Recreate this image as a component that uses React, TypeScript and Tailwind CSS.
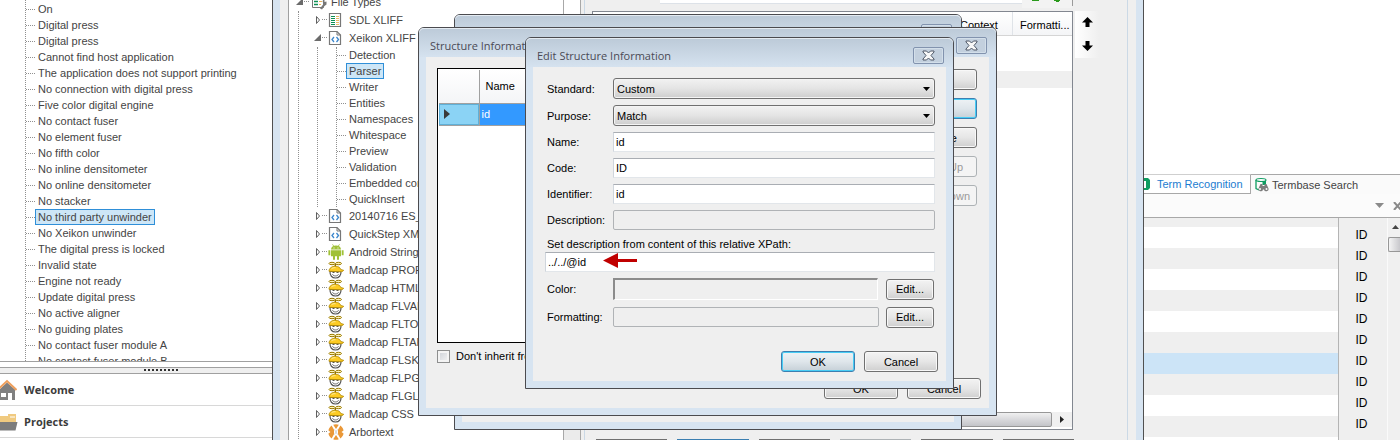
import type { ReactNode } from "react";
import clsx from "clsx";

const bodyFont = "font-['Liberation_Sans',Arial,sans-serif] text-[11px]";
const titleFont = "font-['Open_Sans','Liberation_Sans',sans-serif]";

const messages = [
  "On",
  "Digital press",
  "Digital press",
  "Cannot find host application",
  "The application does not support printing",
  "No connection with digital press",
  "Five color digital engine",
  "No contact fuser",
  "No element fuser",
  "No fifth color",
  "No inline densitometer",
  "No online densitometer",
  "No stacker",
  "No third party unwinder",
  "No Xeikon unwinder",
  "The digital press is locked",
  "Invalid state",
  "Engine not ready",
  "Update digital press",
  "No active aligner",
  "No guiding plates",
  "No contact fuser module A",
  "No contact fuser module B",
];

const parserPages = [
  "Detection",
  "Parser",
  "Writer",
  "Entities",
  "Namespaces",
  "Whitespace",
  "Preview",
  "Validation",
  "Embedded content",
  "QuickInsert",
];

function Label({ children, selected }: { children: ReactNode; selected?: boolean }) {
  return (
    <span
      className={clsx(
        "border px-[2px] leading-[14px] whitespace-nowrap",
        selected ? "border-[#2f8fd8] bg-[#cde6f7]" : "border-transparent",
      )}
    >
      {children}
    </span>
  );
}

function Leaf({ children, selected }: { children: ReactNode; selected?: boolean }) {
  return (
    <li className="flex h-4 items-center">
      <span className="w-[9px] border-t border-dotted border-[#909090]" />
      <Label selected={selected}>{children}</Label>
    </li>
  );
}

function Expander({ open }: { open?: boolean }) {
  return (
    <svg width="14" height="18" viewBox="0 0 14 18" className="shrink-0" shapeRendering="crispEdges">
      <path d="M8 8h1v1H8zM10 8h1v1h-1zM12 8h1v1h-1z" fill="#909090" />
      {open ? (
        <path d="M7 5v7H0z" fill="#6b6b6b" shapeRendering="auto" />
      ) : (
        <path d="M2.500 5.500v7l3-3.500z" fill="#fff" stroke="#606060" shapeRendering="auto" />
      )}
    </svg>
  );
}

function FileTypesIcon() {
  return (
    <svg width="15" height="16" viewBox="0 0 15 16" className="shrink-0">
      <path d="M.5.5h11v13H.5z" fill="#fff" stroke="#777" />
      <path d="M2 4.500h4M2 7.500h4M2 10.500h4" stroke="#0c8f55" strokeWidth="1.500" />
      <path d="M7 4.500h3M7 7.500h3M7 10.500h2" stroke="#e6b45c" />
      <path d="M8 14.500 11.500 10 10.500 7l2-2v3l2-.5v3l-2 1.500L10 15.500z" fill="#777" />
    </svg>
  );
}

function XliffIcon() {
  return (
    <svg width="14" height="16" viewBox="0 0 14 16" className="shrink-0">
      <path d="M1.500 1.500h11v13h-11z" fill="#fff" stroke="#777" strokeWidth="1.200" />
      <path d="M3 4.500h4M3 6.500h4M3 8.500h4M3 10.500h4M3 12.500h4" stroke="#0c8f55" />
      <path d="M8 4.500h3M8 6.500h3M8 8.500h3M8 10.500h3M8 12.500h3" stroke="#e9b765" />
    </svg>
  );
}

function XmlIcon() {
  return (
    <svg width="14" height="16" viewBox="0 0 14 16" className="shrink-0">
      <path d="M1.500 1.500h7.500l3.500 3.500v9.500h-11z" fill="#fff" stroke="#777" strokeWidth="1.200" />
      <path d="M9 1.500V5h3.500" fill="none" stroke="#777" />
      <path d="M6 7 4 9.500 6 12M8.500 7l2 2.500-2 2.500" fill="none" stroke="#3b86cc" strokeWidth="1.300" />
    </svg>
  );
}

function AndroidIcon() {
  return (
    <svg width="16" height="16" viewBox="0 0 16 16" className="shrink-0" fill="#a0c137">
      <path d="M3 5.500C3.200 3 5 1.600 8 1.600s4.800 1.400 5 3.900z" />
      <path d="M4.500.3 6 2.500M11.500.3 10 2.500" stroke="#a0c137" strokeWidth=".8" />
      <path d="M3 6.300h10v6H3zM.4 6.300h1.900v5H.4zM13.700 6.300h1.900v5h-1.900zM5 12h2v3.800H5zM9 12h2v3.800H9z" />
      <path d="M5.500 3.500h1v1h-1zM9.500 3.500h1v1h-1z" fill="#fff" />
    </svg>
  );
}

function MadcapIcon() {
  return (
    <svg width="16" height="18" viewBox="0 0 16 18" className="shrink-0">
      <ellipse cx="4" cy="2.500" rx="3" ry="1.200" fill="#fff3b8" stroke="#9a7a00" />
      <ellipse cx="10.500" cy="2.500" rx="3" ry="1.200" fill="#fff3b8" stroke="#9a7a00" />
      <path d="M7.300 3v3" stroke="#8f7000" strokeWidth="1.400" />
      <path d="M2 10.500c-.2 4 2 6.500 5.500 6.500s5.700-2.500 5.500-6.500z" fill="#fff" stroke="#555" strokeWidth="1.200" />
      <path d="M4.500 11.500h2M8.500 11.500h2" stroke="#555" />
      <path d="M4.500 13.300c1 2.200 5 2.200 6 0" fill="none" stroke="#666" />
      <path d="M1 10.300C1 7 4 5.200 7.500 5.200c3 0 4.800 1.500 5.300 3.300l2.900.8c-.8 1.300-2 1.500-3.500 1.500z" fill="#fdcb22" stroke="#b08800" strokeWidth=".8" />
      <path d="M3.500 7.800c1-.9 2.500-1.200 4-1.100" stroke="#fff3b0" fill="none" />
    </svg>
  );
}

function ArbortextIcon() {
  return (
    <svg width="16" height="16" viewBox="0 0 16 16" className="shrink-0">
      <g fill="#ea9838">
        <path d="M5.200.8c1.700-.7 3.900-.7 5.600 0L8 5z" />
        <path d="M5.200 15.200c1.700.7 3.900.7 5.600 0L8 11z" />
        <path d="M3.600 1.500 6 5.800v4.400l-2.400 4.300c-4.500-3.400-4.500-9.600 0-13z" />
        <path d="M12.400 1.500 10 5.800v4.400l2.400 4.300c4.500-3.400 4.500-9.600 0-13z" />
      </g>
      <path d="M0 6.200 2.500 8 0 9.800zM16 6.200 13.500 8 16 9.800z" fill="#fff" />
      <path d="m6.500 5.500 3 5M9.500 5.500l-3 5" stroke="#d5d5d5" />
    </svg>
  );
}

function TreeRow({ icon, open, children }: { icon: ReactNode; open?: boolean; children: ReactNode }) {
  return (
    <div className="flex h-[18px] items-center pl-[15px]">
      <Expander open={open} />
      <span className="flex w-[18px] shrink-0 items-center">{icon}</span>
      <Label>{children}</Label>
    </div>
  );
}

function CloseButton() {
  return (
    <button
      type="button"
      aria-label="Close"
      className="flex h-[17px] w-[31px] items-center justify-center rounded-[2px] border border-[#8293ae] bg-[#c3d0de] shadow-[inset_0_0_0_1px_#d3dfea]"
    >
      <svg width="13" height="11" viewBox="0 0 13 11">
        <path d="M1 1h3.500l2 2 2-2H12v1L9 5.500 12 9v1H8.500l-2-2-2 2H1V9l3-3.500L1 2z" fill="#f8f8f8" stroke="#4e5766" />
      </svg>
    </button>
  );
}

function Dialog({ title, place, children }: { title?: string; place: string; children?: ReactNode }) {
  return (
    <section
      className={clsx(
        "absolute flex flex-col rounded-t-[6px] border border-[#4b4b4f] bg-[#d7e4f1] px-[7px] pb-[7px]",
        place,
      )}
    >
      <header className="-mx-[7px] flex h-[29px] shrink-0 justify-between rounded-t-[5px] bg-linear-to-b from-[#bccad8] to-[#d5e2ef] pr-[9px] pl-[11px] shadow-[inset_0_1px_0_#e4ebf2]">
        <h2 className={clsx("pt-[10px] text-[11px] leading-4 text-[#4a4a55]", titleFont)}>{title}</h2>
        <div className="pt-[9px]">
          <CloseButton />
        </div>
      </header>
      <div className="flex-1 bg-[#efefef]">{children}</div>
    </section>
  );
}

function PushButton({ children, kind = "normal", width }: { children: ReactNode; kind?: "normal" | "default" | "disabled"; width: string }) {
  return (
    <button
      type="button"
      disabled={kind === "disabled"}
      className={clsx(
        "h-[21px] shrink-0 rounded-[3px] border text-center leading-4",
        width,
        kind === "normal" &&
          "border-[#707070] bg-linear-to-b from-[#f3f3f3] from-0% via-[#e6e6e6] via-50% to-[#cfcfcf] shadow-[inset_0_0_0_1px_#f8f8f8]",
        kind === "default" &&
          "border-[#3c7fb1] bg-linear-to-b from-[#eef2f5] via-[#dfe6eb] via-50% to-[#c6d0d7] shadow-[inset_0_0_0_1px_#48cdf5]",
        kind === "disabled" && "border-[#adb2b5] bg-[#f4f4f4] text-[#9a9a9a]",
      )}
    >
      {children}
    </button>
  );
}

function SelectRow({ id, label, value }: { id: string; label: string; value: string }) {
  return (
    <div className="flex items-center">
      <label htmlFor={id} className="w-[68px] shrink-0 pl-[2px]">{label}</label>
      <div className="relative flex-1">
        <select
          id={id}
          defaultValue={value}
          className="block h-[21px] w-full appearance-none rounded-[3px] border border-[#707070] bg-linear-to-b from-[#f2f2f2] via-[#e4e4e4] via-50% to-[#cdcdcd] pl-[3px] shadow-[inset_0_0_0_1px_#f4f4f4]"
        >
          <option>{value}</option>
        </select>
        <svg width="7" height="4" viewBox="0 0 7 4" className="pointer-events-none absolute top-[9px] right-[5px]">
          <path d="M0 0h7L3.500 4z" />
        </svg>
      </div>
    </div>
  );
}

const fieldBorder = "border border-[#e2e6ea] border-t-[#a9adb3] border-l-[#cfd5dc]";

function TextRow({ id, label, value, readOnly }: { id: string; label: string; value: string; readOnly?: boolean }) {
  return (
    <div className="flex items-center">
      <label htmlFor={id} className="w-[68px] shrink-0 pl-[2px]">{label}</label>
      <input
        id={id}
        type="text"
        defaultValue={value}
        readOnly={readOnly}
        className={clsx(
          "h-5 min-w-0 flex-1 px-[2px]",
          readOnly ? "rounded-[2px] border border-[#b0b3b6] bg-[#efefef]" : ["bg-white", fieldBorder],
        )}
      />
    </div>
  );
}

function Navigation() {
  return (
    <aside className="flex w-[273px] shrink-0 flex-col border-r border-[#505050] bg-white">
      <div className="min-h-0 flex-1 overflow-hidden pl-[25px]">
        <ul className="border-l border-dotted border-[#909090] pt-px">
          {messages.map((text, i) => (
            <Leaf key={i} selected={text === "No third party unwinder"}>{text}</Leaf>
          ))}
        </ul>
      </div>
      <div className="h-[6px] border-t border-[#a0a0a0]" />
      <div className="flex h-[7px] items-center border-y border-[#a0a0a0] bg-[#efefef] pl-[144px]">
        <svg width="35" height="3" viewBox="0 0 35 3" shapeRendering="crispEdges">
          <path d="M0 1h35" stroke="#303030" strokeWidth="2" strokeDasharray="2 2" />
        </svg>
      </div>
      <a href="#welcome" className="flex h-8 items-center border-b border-[#d8d8d8]">
        <svg width="17" height="22" viewBox="0 0 17 22">
          <path d="M0 10 7 3.500l8 7V21h-3v-7H8v7H0z" fill="#808080" />
          <path d="M1 14h5v4H1z" fill="#fff" />
          <path d="M-1 9.500 7 2l9.500 9" fill="none" stroke="#ee9f5d" strokeWidth="2" />
        </svg>
        <span className={clsx("pl-[7px] text-[11px] leading-4 font-bold text-[#3c3c3c]", titleFont)}>Welcome</span>
      </a>
      <a href="#projects" className="flex h-8 items-center border-b border-[#d8d8d8]">
        <svg width="18" height="20" viewBox="0 0 18 20">
          <path d="M0 4h8V2h8v8H0z" fill="#f0ca80" />
          <path d="M0 3h8M10 5h5" stroke="#fff" />
          <path d="M0 10h17.500l-2 8.500H0z" fill="#7c7c7c" />
        </svg>
        <span className={clsx("pl-[6px] text-[11px] leading-4 font-bold text-[#3c3c3c]", titleFont)}>Projects</span>
      </a>
      <div className="h-[2px]" />
    </aside>
  );
}

function FileTypesTree() {
  const madcap = ["PROPERTIES", "HTML", "FLVAR", "FLTOC", "FLTAR", "FLSKN", "FLPGL", "FLGLO", "CSS"];
  return (
    <div className="w-[275px] shrink-0 overflow-hidden border-l border-[#a0a0a0] bg-white text-[#444]">
      <div className="-mt-[7px] flex h-[18px] items-center pl-[7px]">
        <Expander open />
        <span className="flex w-[18px] shrink-0 justify-center">
          <FileTypesIcon />
        </span>
        <Label>File Types</Label>
      </div>
      <div className="ml-[9px] border-l border-dotted border-[#909090]">
        <TreeRow icon={<XliffIcon />}>SDL XLIFF</TreeRow>
        <TreeRow icon={<XmlIcon />} open>Xeikon XLIFF</TreeRow>
        <div className="ml-[18px] border-l border-dotted border-[#909090] pl-[18px]">
          <ul className="border-l border-dotted border-[#909090]">
            {parserPages.map((text) => (
              <Leaf key={text} selected={text === "Parser"}>{text}</Leaf>
            ))}
          </ul>
        </div>
        <TreeRow icon={<XmlIcon />}>20140716 ES_</TreeRow>
        <TreeRow icon={<XmlIcon />}>QuickStep XML</TreeRow>
        <TreeRow icon={<AndroidIcon />}>Android Strings</TreeRow>
        {madcap.map((text) => (
          <TreeRow key={text} icon={<MadcapIcon />}>Madcap {text}</TreeRow>
        ))}
        <TreeRow icon={<ArbortextIcon />}>Arbortext</TreeRow>
      </div>
    </div>
  );
}

function ArrowIcon({ down }: { down?: boolean }) {
  return (
    <svg width="11" height="10" viewBox="0 0 11 10" className={clsx(down && "rotate-180")}>
      <path d="M5.500 0 11 5.500H7.500V10h-4V5.500H0z" />
    </svg>
  );
}

function OptionsPane() {
  return (
    <div className="flex min-w-0 flex-1 flex-col overflow-hidden border-l border-[#cbd9e6] pl-[7px]">
      <div className="flex h-[11px] shrink-0 items-start pr-[54px]">
        <div className="ml-[68px] h-1 flex-1 border-b border-[#dde2e8] bg-white" />
        <svg width="50" height="8" viewBox="0 0 50 8" className="bg-[#f3f3f3]">
          <path d="M10 0h7v1h-7zM32 0h6v1h-6zM34 1h3v1h-3z" fill="#2a9a1c" />
        </svg>
        <span className="h-[6px] w-px bg-[#9a9a9a]" />
      </div>
      <div className="flex min-h-0 flex-1">
        <div className="flex min-w-0 flex-1 flex-col border border-[#828790] bg-white">
          <div className="flex h-6 shrink-0 justify-end border-b border-[#d5d5d5] bg-linear-to-b from-white to-[#f4f5f7] leading-[26px]">
            <span className="w-[60px] border-r border-[#dfe3e8] pl-[7px]">Context</span>
            <span className="w-[59px] pl-[7px]">Formatti...</span>
          </div>
          <div className="mt-[35px] h-[17px] bg-[#efefef]" />
          <div className="flex-1" />
          <div className="mb-[2px] flex h-[15px] shrink-0 bg-[#f0f0f0]">
            <div className="flex-1 rounded-[2px] border border-[#979797] bg-linear-to-b from-[#f0f0f0] via-[#d9d9dc] via-50% to-[#c4c5c9]" />
            <div className="flex w-5 items-center justify-center">
              <svg width="4" height="7" viewBox="0 0 4 7"><path d="M0 0v7l4-3.500z" fill="#222" /></svg>
            </div>
          </div>
        </div>
        <div className="w-[54px] pl-[2px]">
          <div className="flex h-[47px] w-6 flex-col items-center gap-[14px] bg-linear-to-r from-white to-[#efefef] pt-[6px]">
            <button type="button" aria-label="Move up"><ArrowIcon /></button>
            <button type="button" aria-label="Move down"><ArrowIcon down /></button>
          </div>
        </div>
      </div>
      <div className="mt-[9px] flex h-px shrink-0 gap-[10px] pr-[53px] pl-1">
        <div className="flex-1 bg-[#707070]" />
        <div className="flex-1 bg-[#3c7fb1]" />
        <div className="flex-1 bg-[#707070]" />
        <div className="flex-1 bg-[#adb2b5]" />
        <div className="flex-1 bg-[#707070]" />
        <div className="flex-1 bg-[#707070]" />
      </div>
    </div>
  );
}

function TermPanel() {
  return (
    <div className="flex w-[257px] shrink-0 flex-col overflow-hidden border-l border-[#505050] bg-white text-[#444]">
      <div className="h-[174px] shrink-0" />
      <div className="flex h-5 shrink-0 bg-[#fafafa] whitespace-nowrap">
        <button type="button" className="flex w-[107px] shrink-0 items-center border-t border-r border-b border-[#a8a8a8] border-t-[#cfcfcf] bg-white text-[#1c7cd0]">
          <svg width="6" height="12" viewBox="0 0 6 12">
            <path d="M0 0h4l2 2v8l-2 2H0z" fill="#0f9d62" />
            <path d="M0 3h2v7H0z" fill="#fff" />
          </svg>
          <span className="pl-[7px]">Term Recognition</span>
        </button>
        <button type="button" className="flex flex-1 items-center border-t border-[#a8a8a8] pl-1">
          <svg width="14" height="15" viewBox="0 0 14 15">
            <path d="M1 3v8.500l3 1.500" fill="none" stroke="#0f9d62" strokeWidth="1.300" />
            <ellipse cx="6" cy="3" rx="5" ry="1.500" fill="#fff" stroke="#0f9d62" strokeWidth="1.200" />
            <path d="M7.500 4.500 11 3.500V8H7.500z" fill="#0f9d62" />
            <path d="M5.500 7h2v2h2V7h2l2 4.500a2.300 2.300 0 1 1-4.500 1h-1a2.300 2.300 0 1 1-4.500-1z" fill="#7d7d7d" />
            <circle cx="5" cy="12" r="1" fill="#fff" /><circle cx="11.500" cy="12" r="1" fill="#fff" />
          </svg>
          <span className="pl-[3px]">Termbase Search</span>
        </button>
      </div>
      <div className="flex h-6 shrink-0 items-center justify-end gap-[9px] border-b border-[#a8a8a8] bg-[#fbfbfb]">
        <svg width="9" height="5" viewBox="0 0 9 5"><path d="M0 0h9L4.500 5z" fill="#8a8a8a" /></svg>
        <svg width="7" height="8" viewBox="0 0 7 8"><path d="m1 0 7 8M8 0 1 8" stroke="#8a8a8a" strokeWidth="2" /></svg>
      </div>
      <div className="flex min-h-0 flex-1 overflow-hidden">
        <table className="w-full flex-1 border-collapse text-black">
          <tbody>
            <tr className="h-[9px] bg-[#efefef]">
              <td className="w-[194px] border-r border-[#b4b4b4]" />
              <td />
            </tr>
            {Array.from({ length: 11 }, (_, i) => (
              <tr key={i} className="h-[21px]">
                <td className={clsx("border-r border-[#b4b4b4]", i === 6 ? "bg-[#cce4f7]" : i % 2 ? "bg-[#efefef]" : "bg-white")} />
                <td className="bg-[#efefef] pl-[17px] align-top text-[12px] leading-4">{i < 10 ? "ID" : ""}</td>
              </tr>
            ))}
          </tbody>
        </table>
        <div className="flex w-[13px] shrink-0 flex-col border-l border-[#fafafa] bg-[#f0f0f0]">
          <svg width="12" height="19" viewBox="0 0 12 19"><path d="M4 11 7.500 7l3.500 4z" fill="#444" /></svg>
          <div className="h-[15px] rounded-l-[2px] border border-r-0 border-[#979797] bg-linear-to-r from-[#f4f4f4] to-[#c8c8cc]" />
        </div>
      </div>
    </div>
  );
}

function StructureDialog() {
  return (
    <Dialog title="Structure Information" place="top-[27px] left-[418px] h-[389px] w-[579px]">
      <div className="flex h-full flex-col pt-[11px] pr-[12px] pl-[11px]">
        <div className="flex gap-3">
          <div className="h-[275px] w-[456px] border border-black bg-white p-px">
            <table className="w-full border-collapse">
              <thead>
                <tr className="h-[33px] bg-linear-to-b from-white to-[#f4f5f7]">
                  <th className="w-10 border-r border-b border-[#a0a0a0]" />
                  <th className="border-b border-[#a0a0a0] pl-[6px] text-left font-normal">Name</th>
                </tr>
              </thead>
              <tbody>
                <tr className="h-[22px]">
                  <td className="border-r border-b border-[#a0a0a0] bg-[#8bd3f5] pl-[5px] shadow-[inset_0_0_0_1px_#5fb0d8]">
                    <svg width="6" height="10" viewBox="0 0 6 10"><path d="M0 0v10l6-5z" fill="#3a3a3a" /></svg>
                  </td>
                  <td className="border-b border-[#a0a0a0] bg-[#3399ff] pl-[2px] text-white">id</td>
                </tr>
              </tbody>
            </table>
          </div>
          <div className="flex flex-1 flex-col gap-2 pt-px">
            <PushButton width="w-full">Add</PushButton>
            <PushButton width="w-full" kind="default">Edit</PushButton>
            <PushButton width="w-full">Delete</PushButton>
            <PushButton width="w-full" kind="disabled">Move Up</PushButton>
            <PushButton width="w-full" kind="disabled">Move Down</PushButton>
          </div>
        </div>
        <label className="mt-[5px] flex items-center gap-[6px] leading-4">
          <input
            type="checkbox"
            className="size-[13px] appearance-none border border-[#8e8f8f] bg-linear-to-br from-[#cbcfd5] to-[#f6f6f6] shadow-[inset_0_0_0_2px_#f4f4f4]"
          />
          Don't inherit from
        </label>
        <div className="mt-[14px] -mr-1 flex justify-end gap-[9px]">
          <PushButton width="w-[74px]">OK</PushButton>
          <PushButton width="w-[74px]">Cancel</PushButton>
        </div>
      </div>
    </Dialog>
  );
}

function EditDialog() {
  return (
    <Dialog title="Edit Structure Information" place="top-[37px] left-[525px] w-[429px]">
      <form className="flex flex-col gap-[6px] pt-[11px] pr-[11px] pb-[9px] pl-[12px] leading-4">
        <SelectRow id="standard" label="Standard:" value="Custom" />
        <SelectRow id="purpose" label="Purpose:" value="Match" />
        <TextRow id="name" label="Name:" value="id" />
        <TextRow id="code" label="Code:" value="ID" />
        <TextRow id="identifier" label="Identifier:" value="id" />
        <TextRow id="description" label="Description:" value="" readOnly />
        <div className="relative">
          <label htmlFor="xpath" className="block h-4 pl-[2px]">Set description from content of this relative XPath:</label>
          <input id="xpath" type="text" defaultValue="../../@id" className={clsx("block h-5 w-full bg-white px-[2px]", fieldBorder)} />
          <svg width="34" height="15" viewBox="0 0 34 15" className="pointer-events-none absolute top-[17px] left-[58px]">
            <path d="M0 7.500 15 0v6h19v3H15v6z" fill="#c00000" />
          </svg>
        </div>
        <div className="flex items-center pr-px">
          <span className="w-[68px] shrink-0 pl-[2px]">Color:</span>
          <div className="mr-[8px] h-[22px] flex-1 border border-white border-t-2 border-t-[#8c8c8c] border-l-2 border-l-[#8c8c8c]" />
          <PushButton width="w-[48px]">Edit...</PushButton>
        </div>
        <div className="flex h-[22px] items-center pr-px">
          <div className="mr-[7px] flex-1">
            <TextRow id="formatting" label="Formatting:" value="" readOnly />
          </div>
          <PushButton width="w-[48px]">Edit...</PushButton>
        </div>
        <div className="mt-[17px] -mr-[3px] flex justify-end gap-[9px]">
          <PushButton width="w-[74px]" kind="default">OK</PushButton>
          <PushButton width="w-[74px]">Cancel</PushButton>
        </div>
      </form>
    </Dialog>
  );
}

export default function App() {
  return (
    <div className={clsx("relative flex h-screen overflow-hidden bg-white leading-4 text-black", bodyFont)}>
      <div className="flex shrink-0 text-[#444]">
        <Navigation />
      </div>
      <main className="flex min-w-0 flex-1 overflow-hidden border-x-[7px] border-[#d7e4f1] bg-[#efefef] pr-[8px] pl-[8px]">
        <FileTypesTree />
        <div className="flex w-[18px] shrink-0 flex-col border-x border-[#a8a8a8] bg-white">
          <div className="flex-1" />
          <div className="h-[17px] bg-[#ebebeb]" />
        </div>
        <div className="w-[3px] shrink-0" />
        <OptionsPane />
        <div className="w-px shrink-0 bg-[#cbd9e6]" />
      </main>
      <TermPanel />
      <Dialog place="top-[14px] left-[454px] h-[416px] w-[508px]" />
      <StructureDialog />
      <EditDialog />
    </div>
  );
}
